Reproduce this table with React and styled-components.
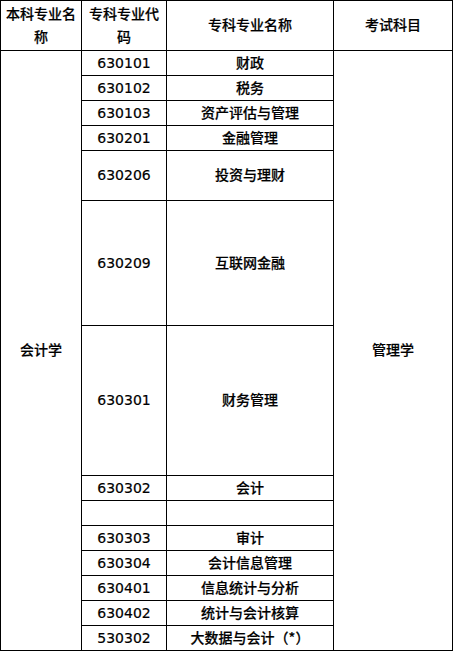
import React from "react";
import styled, { createGlobalStyle } from "styled-components";

const GlobalStyle = createGlobalStyle`
  html, body {
    margin: 0;
    padding: 0;
    background: #fff;
  }
`;

const rows = [
  { code: "630101", name: "财政", h: 25 },
  { code: "630102", name: "税务", h: 25 },
  { code: "630103", name: "资产评估与管理", h: 25 },
  { code: "630201", name: "金融管理", h: 25 },
  { code: "630206", name: "投资与理财", h: 50 },
  { code: "630209", name: "互联网金融", h: 125 },
  { code: "630301", name: "财务管理", h: 150 },
  { code: "630302", name: "会计", h: 25 },
  { code: "", name: "", h: 25 },
  { code: "630303", name: "审计", h: 25 },
  { code: "630304", name: "会计信息管理", h: 25 },
  { code: "630401", name: "信息统计与分析", h: 25 },
  { code: "630402", name: "统计与会计核算", h: 25 },
  { code: "530302", name: "大数据与会计（*）", h: 25 },
];

const Table = styled.table`
  width: 453px;
  table-layout: fixed;
  border-collapse: collapse;
  font-family: "DejaVu Sans", "Noto Sans CJK SC", sans-serif;
  font-size: 14px;
  font-weight: 500;
  color: #000;
  -webkit-text-stroke: 0.2px #000;
`;

const Row = styled.tr`
  height: ${(p) => p.$h}px;
`;

const Cell = styled.td`
  border: 1px solid #000;
  padding: 0 1px;
  text-align: center;
  vertical-align: middle;
  line-height: 23px;
  white-space: normal;
  word-break: break-all;
`;

const HeadCell = styled(Cell).attrs({ as: "th" })`
  font-weight: 500;
`;

const Paren = styled.span`
  font-family: "Noto Sans CJK SC", sans-serif;
`;

export default function App() {
  return (
    <>
      <GlobalStyle />
      <Table>
        <colgroup>
          <col style={{ width: 81 }} />
          <col style={{ width: 85 }} />
          <col style={{ width: 167 }} />
          <col style={{ width: 119 }} />
        </colgroup>
        <thead>
          <Row $h={50}>
            <HeadCell>本科专业名称</HeadCell>
            <HeadCell>专科专业代码</HeadCell>
            <HeadCell>专科专业名称</HeadCell>
            <HeadCell>考试科目</HeadCell>
          </Row>
        </thead>
        <tbody>
          {rows.map((r, i) => (
            <Row key={i} $h={r.h}>
              {i === 0 && <Cell rowSpan={rows.length}>会计学</Cell>}
              <Cell>{r.code}</Cell>
              <Cell>
                {r.name.endsWith("（*）") ? (
                  <>
                    {r.name.slice(0, -3)}
                    <Paren>（*）</Paren>
                  </>
                ) : (
                  r.name
                )}
              </Cell>
              {i === 0 && <Cell rowSpan={rows.length}>管理学</Cell>}
            </Row>
          ))}
        </tbody>
      </Table>
    </>
  );
}
